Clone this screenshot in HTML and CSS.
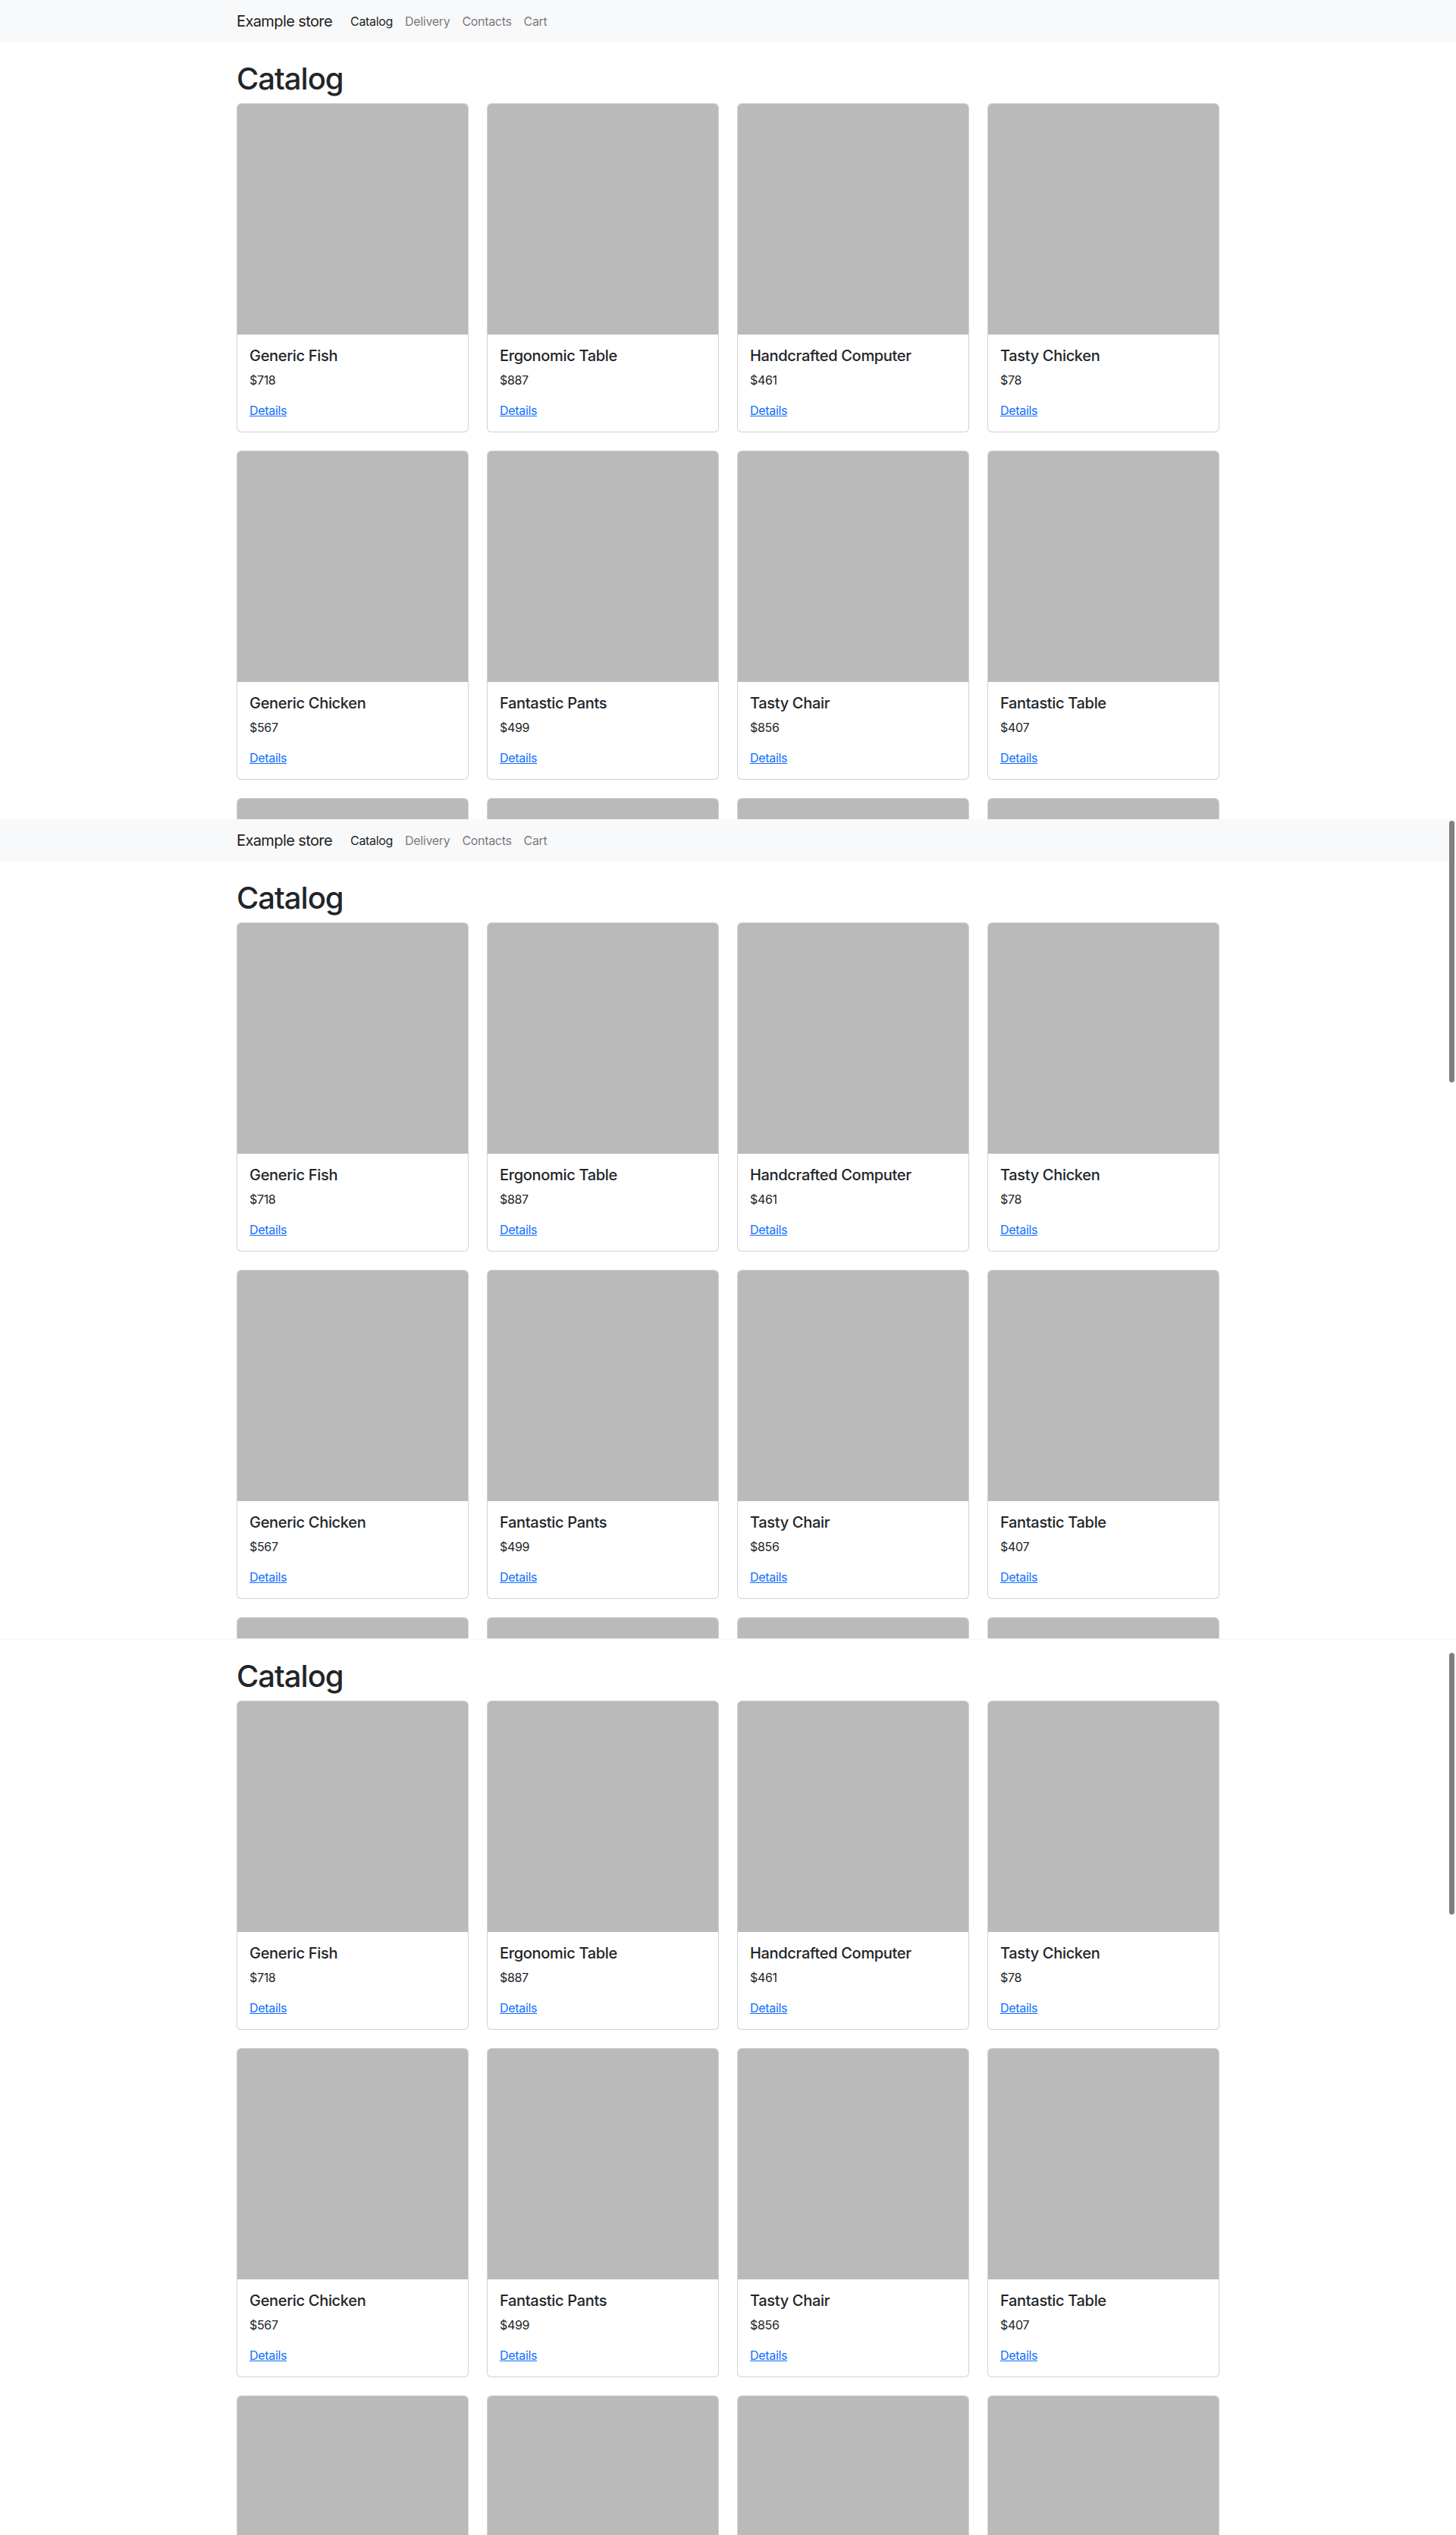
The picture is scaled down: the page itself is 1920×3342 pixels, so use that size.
FILE: index.html
```html
<!DOCTYPE html>
<html lang="en">
<head>
<meta charset="utf-8">
<title>Example store</title>
<link rel="stylesheet" href="styles.css">
</head>
<body>

<div class="screen screen-a">
  <div class="page">
    <nav class="navbar">
      <div class="nav-inner">
        <a class="brand" href="#">Example store</a>
        <a class="nav-link active" href="#">Catalog</a>
        <a class="nav-link" href="#">Delivery</a>
        <a class="nav-link" href="#">Contacts</a>
        <a class="nav-link" href="#">Cart</a>
      </div>
    </nav>
    <main class="container">
      <h1 class="title">Catalog</h1>
      <div class="grid">
        <div class="card"><div class="thumb"></div><div class="card-body"><h5 class="card-title">Generic Fish</h5><p class="price">$718</p><a class="details" href="#">Details</a></div></div>
        <div class="card"><div class="thumb"></div><div class="card-body"><h5 class="card-title">Ergonomic Table</h5><p class="price">$887</p><a class="details" href="#">Details</a></div></div>
        <div class="card"><div class="thumb"></div><div class="card-body"><h5 class="card-title">Handcrafted Computer</h5><p class="price">$461</p><a class="details" href="#">Details</a></div></div>
        <div class="card"><div class="thumb"></div><div class="card-body"><h5 class="card-title">Tasty Chicken</h5><p class="price">$78</p><a class="details" href="#">Details</a></div></div>
        <div class="card"><div class="thumb"></div><div class="card-body"><h5 class="card-title">Generic Chicken</h5><p class="price">$567</p><a class="details" href="#">Details</a></div></div>
        <div class="card"><div class="thumb"></div><div class="card-body"><h5 class="card-title">Fantastic Pants</h5><p class="price">$499</p><a class="details" href="#">Details</a></div></div>
        <div class="card"><div class="thumb"></div><div class="card-body"><h5 class="card-title">Tasty Chair</h5><p class="price">$856</p><a class="details" href="#">Details</a></div></div>
        <div class="card"><div class="thumb"></div><div class="card-body"><h5 class="card-title">Fantastic Table</h5><p class="price">$407</p><a class="details" href="#">Details</a></div></div>
        <div class="card"><div class="thumb"></div></div>
        <div class="card"><div class="thumb"></div></div>
        <div class="card"><div class="thumb"></div></div>
        <div class="card"><div class="thumb"></div></div>
      </div>
    </main>
  </div>
</div>

<div class="screen screen-b">
  <div class="page">
    <nav class="navbar">
      <div class="nav-inner">
        <a class="brand" href="#">Example store</a>
        <a class="nav-link active" href="#">Catalog</a>
        <a class="nav-link" href="#">Delivery</a>
        <a class="nav-link" href="#">Contacts</a>
        <a class="nav-link" href="#">Cart</a>
      </div>
    </nav>
    <main class="container">
      <h1 class="title">Catalog</h1>
      <div class="grid">
        <div class="card"><div class="thumb"></div><div class="card-body"><h5 class="card-title">Generic Fish</h5><p class="price">$718</p><a class="details" href="#">Details</a></div></div>
        <div class="card"><div class="thumb"></div><div class="card-body"><h5 class="card-title">Ergonomic Table</h5><p class="price">$887</p><a class="details" href="#">Details</a></div></div>
        <div class="card"><div class="thumb"></div><div class="card-body"><h5 class="card-title">Handcrafted Computer</h5><p class="price">$461</p><a class="details" href="#">Details</a></div></div>
        <div class="card"><div class="thumb"></div><div class="card-body"><h5 class="card-title">Tasty Chicken</h5><p class="price">$78</p><a class="details" href="#">Details</a></div></div>
        <div class="card"><div class="thumb"></div><div class="card-body"><h5 class="card-title">Generic Chicken</h5><p class="price">$567</p><a class="details" href="#">Details</a></div></div>
        <div class="card"><div class="thumb"></div><div class="card-body"><h5 class="card-title">Fantastic Pants</h5><p class="price">$499</p><a class="details" href="#">Details</a></div></div>
        <div class="card"><div class="thumb"></div><div class="card-body"><h5 class="card-title">Tasty Chair</h5><p class="price">$856</p><a class="details" href="#">Details</a></div></div>
        <div class="card"><div class="thumb"></div><div class="card-body"><h5 class="card-title">Fantastic Table</h5><p class="price">$407</p><a class="details" href="#">Details</a></div></div>
        <div class="card"><div class="thumb"></div></div>
        <div class="card"><div class="thumb"></div></div>
        <div class="card"><div class="thumb"></div></div>
        <div class="card"><div class="thumb"></div></div>
      </div>
    </main>
  </div>
  <div class="scroll-thumb thumb-b"></div>
</div>

<div class="screen screen-c">
  <div class="page page-scrolled">
    <div class="navbar navbar-edge"></div>
    <main class="container">
      <h1 class="title">Catalog</h1>
      <div class="grid">
        <div class="card"><div class="thumb"></div><div class="card-body"><h5 class="card-title">Generic Fish</h5><p class="price">$718</p><a class="details" href="#">Details</a></div></div>
        <div class="card"><div class="thumb"></div><div class="card-body"><h5 class="card-title">Ergonomic Table</h5><p class="price">$887</p><a class="details" href="#">Details</a></div></div>
        <div class="card"><div class="thumb"></div><div class="card-body"><h5 class="card-title">Handcrafted Computer</h5><p class="price">$461</p><a class="details" href="#">Details</a></div></div>
        <div class="card"><div class="thumb"></div><div class="card-body"><h5 class="card-title">Tasty Chicken</h5><p class="price">$78</p><a class="details" href="#">Details</a></div></div>
        <div class="card"><div class="thumb"></div><div class="card-body"><h5 class="card-title">Generic Chicken</h5><p class="price">$567</p><a class="details" href="#">Details</a></div></div>
        <div class="card"><div class="thumb"></div><div class="card-body"><h5 class="card-title">Fantastic Pants</h5><p class="price">$499</p><a class="details" href="#">Details</a></div></div>
        <div class="card"><div class="thumb"></div><div class="card-body"><h5 class="card-title">Tasty Chair</h5><p class="price">$856</p><a class="details" href="#">Details</a></div></div>
        <div class="card"><div class="thumb"></div><div class="card-body"><h5 class="card-title">Fantastic Table</h5><p class="price">$407</p><a class="details" href="#">Details</a></div></div>
        <div class="card"><div class="thumb"></div></div>
        <div class="card"><div class="thumb"></div></div>
        <div class="card"><div class="thumb"></div></div>
        <div class="card"><div class="thumb"></div></div>
      </div>
    </main>
  </div>
  <div class="scroll-thumb thumb-c"></div>
</div>

</body>
</html>
```

FILE: styles.css
```css
* {
  box-sizing: border-box;
}

html, body {
  margin: 0;
  padding: 0;
  background: #ffffff;
}

body {
  font-family: Inter, "Noto Sans", "Liberation Sans", sans-serif;
  font-size: 16px;
  line-height: 1.5;
  color: #212529;
  width: 1920px;
  letter-spacing: -0.02em;
}

.screen {
  position: relative;
  overflow: hidden;
  width: 1920px;
  background: #ffffff;
}

.screen-a { height: 1080px; }
.screen-b { height: 1080px; }
.screen-c { height: 1182px; }

.page-scrolled {
  margin-top: -54px;
}

/* Navbar */
.navbar {
  background: #f8f9fa;
  height: 56px;
}

.nav-inner {
  width: 1320px;
  margin: 0 auto;
  padding: 0 12px;
  height: 56px;
  display: flex;
  align-items: center;
}

.brand {
  font-size: 20px;
  line-height: 30px;
  padding: 5px 0;
  margin-right: 16px;
  color: rgba(0, 0, 0, 0.9);
  text-decoration: none;
  white-space: nowrap;
  letter-spacing: -0.03em;
}

.nav-link {
  font-size: 16px;
  line-height: 24px;
  padding: 8px;
  color: rgba(0, 0, 0, 0.55);
  text-decoration: none;
}

.nav-link.active {
  color: rgba(0, 0, 0, 0.9);
}

/* Content */
.container {
  width: 1320px;
  margin: 0 auto;
  padding: 0 12px;
}

.title {
  margin: 24px 0 8px;
  font-size: 40px;
  line-height: 48px;
  font-weight: 500;
  color: #212529;
  letter-spacing: -0.025em;
}

.grid {
  display: grid;
  grid-template-columns: repeat(4, 306px);
  column-gap: 24px;
  row-gap: 24px;
}

.card {
  border: 1px solid rgba(0, 0, 0, 0.175);
  border-radius: 6px;
  overflow: hidden;
  background: #ffffff;
  min-height: 434px;
}

.thumb {
  height: 304px;
  background: #bababa;
}

.card-body {
  padding: 16px;
}

.card-title {
  margin: 0 0 8px;
  font-size: 20px;
  line-height: 24px;
  font-weight: 500;
  color: #212529;
}

.price {
  margin: 0 0 16px;
  font-size: 16px;
  line-height: 24px;
}

.details {
  display: block;
  width: max-content;
  font-size: 16px;
  line-height: 24px;
  color: #0d6efd;
  text-decoration: underline;
}

/* Overlay scrollbar thumbs */
.scroll-thumb {
  position: absolute;
  right: 2px;
  width: 7px;
  border-radius: 4px;
  background: #7f7f7f;
}

.thumb-b {
  top: 2px;
  height: 345px;
}

.thumb-c {
  top: 19px;
  height: 345px;
}
```
